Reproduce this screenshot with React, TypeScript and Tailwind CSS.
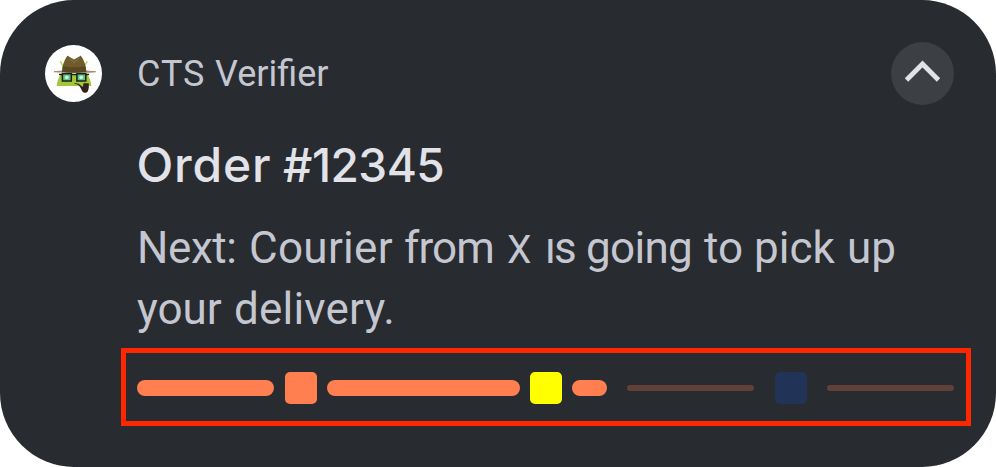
import type { ReactNode } from "react";

function Word({ className, children }: { className: string; children: ReactNode }) {
  return <span className={`block shrink-0 whitespace-nowrap ${className}`}>{children}</span>;
}

function AppIcon() {
  return (
    <span className="flex size-[57px] shrink-0 items-center justify-center overflow-hidden rounded-full bg-white">
      <svg viewBox="0 0 57 57" className="size-[57px]" aria-hidden="true">
        <path d="M15.600 16.800l3 5M42 16.800l-3 5" stroke="#b5dc4a" strokeWidth="1.500" strokeLinecap="round" />
        <path d="M11.700 41c.3-4.200 1.700-8.500 4.300-12h26c2.600 3.500 4 7.800 4.300 12z" fill="#a4c639" />
        <path d="M9 25.900c3 .2 6 0 9-.4h23c3 .4 6 .6 9.700.4v1.300c-7 1.100-34 1.100-41.700 0z" fill="#a58d6c" />
        <path d="M17 26.800c0-6 2.300-11.500 5-15.600.5-.6 1-.5 1.400 0l5.600 3.300 5.800-3.300c.5-.5 1-.5 1.400 0 2.900 4.200 5 9.600 5.100 15.600-7 1-17.300 1-24.300 0z" fill="#705b2e" />
        <path d="M18 21.200c7 1.300 15.500 1.300 22.300 0l1 5.600c-7 1-17.300 1-24.300 0z" fill="#594822" />
        <path d="M24.500 13.500l4.500 4 5-4" fill="none" stroke="#836e3c" strokeWidth="1.300" />
        <path d="M14 29.500h3.500M26.500 29.500h5.500M41 29.500h3" stroke="#18201a" strokeWidth="1.500" />
        <rect x="17.400" y="28.700" width="8.900" height="7.300" fill="#62bf7e" stroke="#18201a" strokeWidth="1.500" />
        <rect x="31.900" y="28.700" width="8.900" height="7.300" fill="#62bf7e" stroke="#18201a" strokeWidth="1.500" />
        <circle cx="21.800" cy="32.300" r="1.900" fill="#c4f7e8" />
        <circle cx="36.200" cy="32.300" r="1.900" fill="#c4f7e8" />
        <path d="M29.300 38.300c3-.4 4.800.4 6.200 2 1.300 1.500 2.300 1.500 2.700.2l.3-2.300h5.200c.3 3.500.2 6-1 8.200-1.200 1.700-4 1.700-5.200 0-1.400-2-2.500-5.200-4.200-6.300-1.200-.8-2.600-1.100-4-1.300z" fill="#30211f" />
      </svg>
    </span>
  );
}

export default function App() {
  return (
    <div className="h-[467px] w-[996px] bg-white">
      <main className="flex h-full w-full flex-col overflow-hidden rounded-[74px] bg-[#282b30] font-['Roboto',sans-serif]">
        <header className="mt-[42px] flex h-[63px] shrink-0 items-center pr-[42px] pl-[45px]">
          <AppIcon />
          <div className="ml-[35px] flex text-[36px] leading-[42px] text-[#c4c6d0]">
            <Word className="w-[78px] tracking-[1px]">CTS</Word>
            <Word className="">Verifier</Word>
          </div>
          <button aria-label="Collapse" className="ml-auto flex size-[63px] items-center justify-center rounded-full bg-[#3c3f43]">
            <svg viewBox="0 0 63 63" className="size-[63px]" fill="none" aria-hidden="true">
              <path d="M15.500 38L31.500 22L47.500 38" stroke="#e2e2e9" strokeWidth="4.800" />
            </svg>
          </button>
        </header>
        <h1 className="mt-[31px] ml-[136.500px] flex h-[58px] shrink-0 items-baseline font-['Inter',sans-serif] text-[46px] leading-[58px] font-medium text-[#e2e2e9]">
          <Word className="w-[146.500px] text-[48px] tracking-[0.8px]">Order</Word>
          <Word className="tracking-[-0.5px]">#12345</Word>
        </h1>
        <div className="mt-[24px] ml-[137px] shrink-0 text-[44px] leading-[61px] text-[#c4c6d0]">
          <p className="flex h-[61px] items-baseline">
            <Word className="w-[112px] tracking-[-0.4px]">Next:</Word>
            <Word className="w-[155px] tracking-[0.3px]">Courier</Word>
            <Word className="w-[103px] tracking-[-0.9px]">from</Word>
            <Word className="w-[38px] text-[39px]">X</Word>
            <Word className="w-[41px] tracking-[-2px]">ıs</Word>
            <Word className="w-[118px] tracking-[-0.7px]">going</Word>
            <Word className="w-[50px]">to</Word>
            <Word className="w-[93px]">pick</Word>
            <Word className="">up</Word>
          </p>
          <p className="flex h-[61px]">
            <Word className="w-[97px]">your</Word>
            <Word className="tracking-[0.2px]">delivery.</Word>
          </p>
        </div>
        <section aria-label="Delivery progress" className="mt-[8px] ml-[121px] flex h-[78px] w-[850px] shrink-0 items-center border-[5px] border-[#ff2600] pt-[2px] pl-[11px]">
          <div className="h-4 w-[137px] rounded-full bg-[#ff7f50]" />
          <div className="ml-[10.500px] size-8 rounded-[5px] bg-[#ff7f50]" />
          <div className="ml-[10px] h-4 w-[193px] rounded-full bg-[#ff7f50]" />
          <div className="ml-[10px] size-8 rounded-[5px] bg-[#ffff00]" />
          <div className="ml-[10px] h-4 w-[35px] rounded-full bg-[#ff7f50]" />
          <div className="ml-[20.500px] h-[6px] w-[127px] rounded-full bg-[#604039]" />
          <div className="ml-[20.500px] size-8 rounded-[5px] bg-[#213356]" />
          <div className="ml-[20.500px] h-[6px] w-[127px] rounded-full bg-[#604039]" />
        </section>
      </main>
    </div>
  );
}
